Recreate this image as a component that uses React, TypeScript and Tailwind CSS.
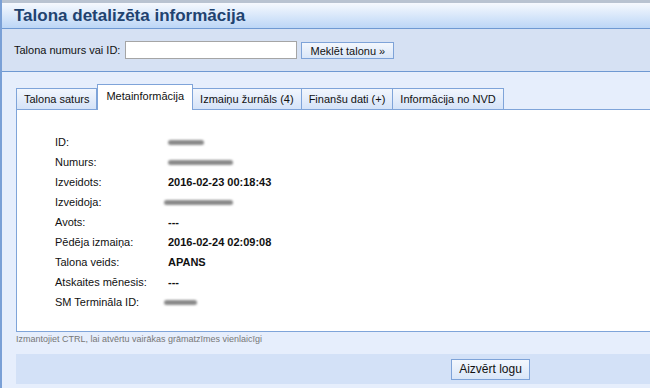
const rows: { label: string; value?: string; blur?: number; shift?: boolean }[] = [
  { label: 'ID:', blur: 36 },
  { label: 'Numurs:', blur: 65 },
  { label: 'Izveidots:', value: '2016-02-23 00:18:43' },
  { label: 'Izveidoja:', blur: 69, shift: true },
  { label: 'Avots:', value: '---' },
  { label: 'Pēdēja izmaiņa:', value: '2016-02-24 02:09:08' },
  { label: 'Talona veids:', value: 'APANS' },
  { label: 'Atskaites mēnesis:', value: '---' },
  { label: 'SM Termināla ID:', blur: 33, shift: true },
]

const tabs = ['Talona saturs', 'Metainformācija', 'Izmaiņu žurnāls (4)', 'Finanšu dati (+)', 'Informācija no NVD']

export default function App() {
  return (
    <div className="relative h-[388px] w-[650px] overflow-hidden border-l-2 border-[#7aa0d6] bg-[#e6eefc] font-['Liberation_Sans',Arial,sans-serif] text-[11px] text-[#111]">
      <div className="h-[3px] bg-[#b9c3d1]" />
      <header className="flex h-[26px] items-center border-b border-[#6f99d2] bg-gradient-to-b from-[#f6f9fe] to-[#bcd6f6] pl-[12px]">
        <h1 className="text-[17px] font-bold text-[#21426f]">Talona detalizēta informācija</h1>
      </header>

      <div className="flex h-[43px] items-center border-b border-[#6f99d2] bg-[#d6e1f3] pl-[12px]">
        <label className="mr-[5px]">Talona numurs vai ID:</label>
        <input className="h-[18px] w-[172px] border border-[#a5a5a5] bg-white" />
        <button className="ml-[4px] h-[17px] w-[93px] border border-[#7ea3d8] bg-gradient-to-b from-[#f3f7fd] to-[#d9e6f8] text-[11px] text-[#111]">
          Meklēt talonu »
        </button>
      </div>

      <div className="pl-[14px] pt-[12px]">
        <div className="flex items-end">
          {tabs.map((t, i) =>
            i === 1 ? (
              <div key={t} className="relative z-10 -mb-px flex h-[26px] items-center border border-b-0 border-[#7fa4d9] bg-white px-[8px] pb-[3px]">
                {t}
              </div>
            ) : (
              <div key={t} className={`flex h-[21px] items-center border border-b-0 border-[#7fa4d9] bg-gradient-to-b from-[#f2f6fd] to-[#d5e3f8] px-[7px] ${i === 0 ? '' : 'border-l-0'}`}>
                {t}
              </div>
            )
          )}
        </div>
        <div className="h-[223px] border border-r-0 border-[#7fa4d9] bg-white pl-[38px] pt-[22px]">
          {rows.map((r) => (
            <div key={r.label} className="flex h-[20px] items-center">
              <span className="w-[113px]">{r.label}</span>
              {r.value ? (
                <span className="font-bold">{r.value}</span>
              ) : (
                <span
                  className={`h-[5px] rounded-full bg-[#8a8a8a] blur-[1.2px] ${r.shift ? '-ml-[4px]' : ''}`}
                  style={{ width: r.blur }}
                />
              )}
            </div>
          ))}
        </div>
        <p className="mt-[1px] text-[9px] leading-[12px] text-[#777]">Izmantojiet CTRL, lai atvērtu vairākas grāmatzīmes vienlaicīgi</p>
        <div className="mt-[9px] flex h-[30px] items-center justify-end bg-[#d3e1f7] pr-[120px]">
          <button className="h-[21px] w-[79px] border border-[#7ea3d8] bg-gradient-to-b from-[#f3f7fd] to-[#d9e6f8] text-[12px] text-[#111]">
            Aizvērt logu
          </button>
        </div>
      </div>
    </div>
  )
}
